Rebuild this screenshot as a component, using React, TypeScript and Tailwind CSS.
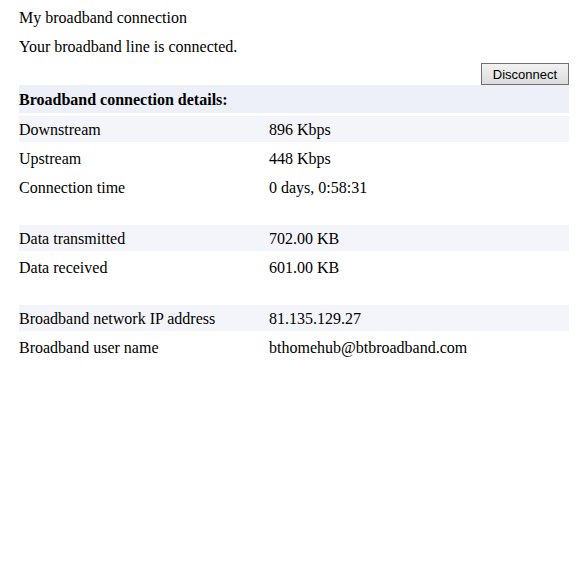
import React from "react";

const serif = { fontFamily: '"Liberation Serif", "Times New Roman", serif' };

function Row({ label, value, shaded }: { label: string; value: string; shaded?: boolean }) {
  return (
    <div className={`flex h-[26px] items-center pt-[2px] ${shaded ? "bg-[#f4f5fa]" : ""}`}>
      <div className="w-[250px]">{label}</div>
      <div>{value}</div>
    </div>
  );
}

export default function App() {
  return (
    <div className="min-h-[585px] w-[581px] bg-white text-[16px] leading-[18px] text-black" style={serif}>
      <div className="pl-[19px] pr-[12px]">
        <div className="flex h-[34px] items-center pt-[2px]">My broadband connection</div>
        <div className="flex h-[24px] items-center pt-[2px]">Your broadband line is connected.</div>
        <div className="mt-[5px] flex justify-end">
          <button
            className="h-[22px] w-[88px] border border-[#707070] bg-gradient-to-b from-[#f2f2f2] to-[#dcdcdc] text-[13px] leading-none text-black"
            style={{ fontFamily: '"Liberation Sans", Arial, sans-serif' }}
          >
            Disconnect
          </button>
        </div>
        <div className="flex h-[28px] items-center bg-[#edf0f8] pt-[2px] font-bold">Broadband connection details:</div>
        <div className="mt-[3px] flex flex-col gap-[3px]">
          <Row label="Downstream" value="896 Kbps" shaded />
          <Row label="Upstream" value="448 Kbps" />
          <Row label="Connection time" value="0 days, 0:58:31" />
          <div className="h-[19px]" />
          <Row label="Data transmitted" value="702.00 KB" shaded />
          <Row label="Data received" value="601.00 KB" />
          <div className="h-[19px]" />
          <Row label="Broadband network IP address" value="81.135.129.27" shaded />
          <Row label="Broadband user name" value="bthomehub@btbroadband.com" />
        </div>
      </div>
    </div>
  );
}
